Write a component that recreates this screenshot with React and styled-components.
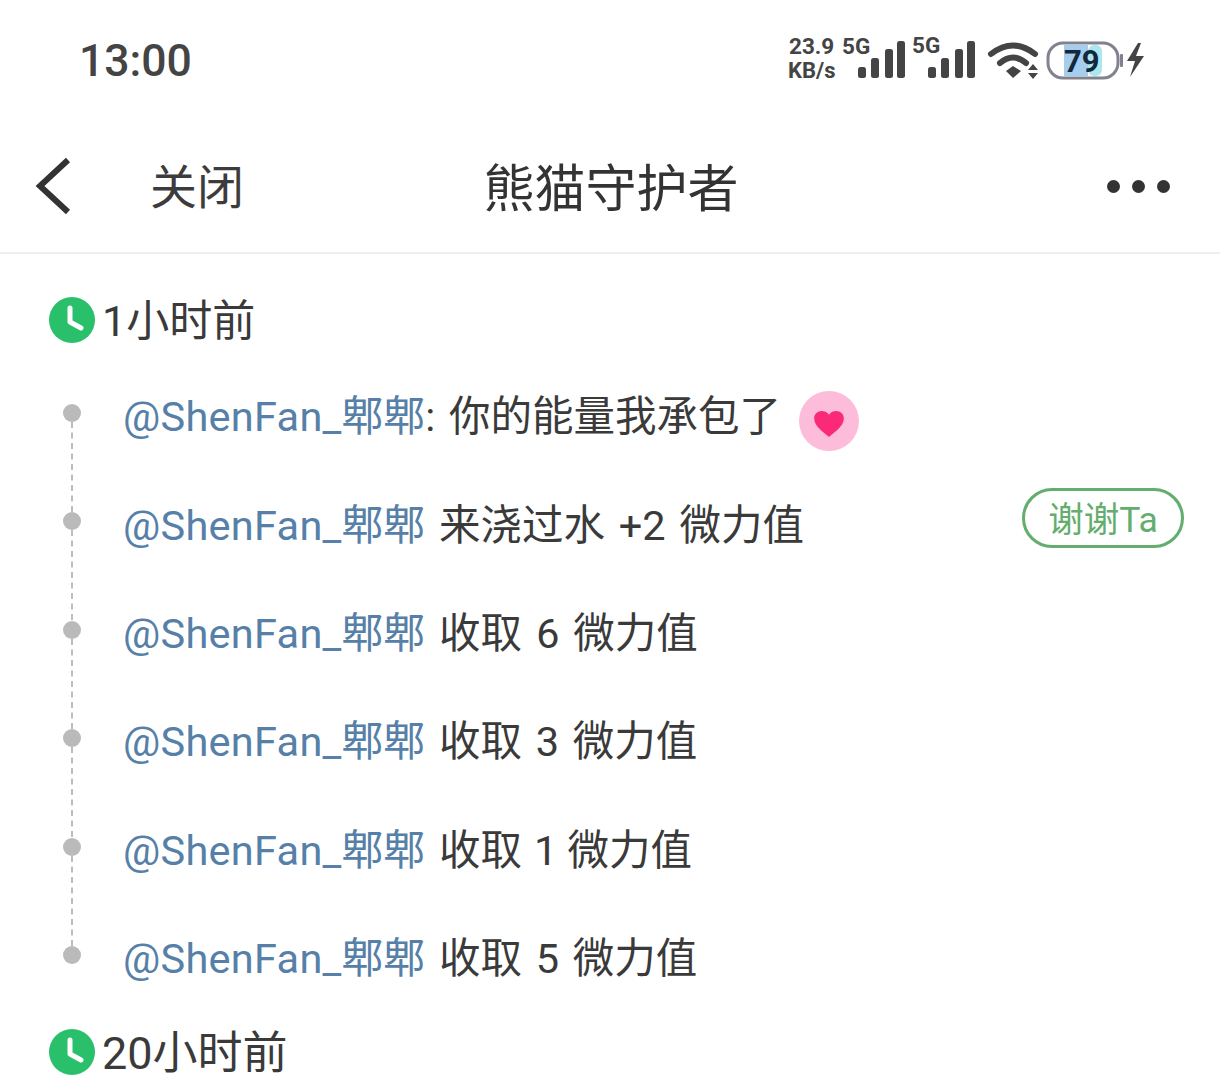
import React from 'react';
import styled, { createGlobalStyle } from 'styled-components';

const GlobalStyle = createGlobalStyle`
  html, body {
    margin: 0;
    padding: 0;
    background: #fff;
  }
  body {
    font-family: Roboto, "Noto Sans CJK SC", sans-serif;
    color: #333;
  }
`;

const Page = styled.div`
  width: 1220px;
  height: 1075px;
  overflow: hidden;
  background: #fff;
`;

const StatusBar = styled.div`
  height: 120px;
  display: flex;
  align-items: center;
  justify-content: space-between;
  padding: 0 74px 0 79px;
`;

const Clock = styled.div`
  margin-top: 2px;
  font-family: Roboto, sans-serif;
  font-size: 44.5px;
  font-weight: 500;
  color: #444;
`;

const StatusIcons = styled.div`
  display: flex;
  align-items: center;
`;

const NavBar = styled.header`
  height: 134px;
  box-sizing: border-box;
  border-bottom: 2px solid #eeeeee;
  display: grid;
  grid-template-columns: 1fr auto 1fr;
  align-items: center;
  padding: 0 35px;
`;

const NavLeft = styled.div`
  display: flex;
  align-items: center;
  gap: 79px;
`;

const CloseLabel = styled.span`
  margin-bottom: 6px;
  font-size: 47px;
  color: #3c3c3c;
`;

const Title = styled.h1`
  margin: 0 0 2px 2px;
  font-size: 51px;
  font-weight: 400;
  color: #333;
`;

const MoreDots = styled.div`
  justify-self: end;
  margin-right: 15px;
  display: flex;
  gap: 12px;
`;

const Dot = styled.span`
  width: 13px;
  height: 13px;
  border-radius: 50%;
  background: #333;
`;

const Feed = styled.main`
  padding: 24px 36px 0 49px;
`;

const GroupHeader = styled.div`
  display: flex;
  align-items: center;
  gap: 7px;
  height: 78px;
  font-size: ${p => p.$size || 43}px;
  color: #3a3a3a;
  white-space: nowrap;
`;

const ClockBadge = styled.span`
  display: flex;
  flex: none;
  width: 46px;
  height: 46px;
  margin-top: 6px;
`;

const Rows = styled.ul`
  list-style: none;
  margin: 3px 0 1px;
  padding: 0;
`;

const Row = styled.li`
  position: relative;
  display: flex;
  align-items: center;
  height: 108.4px;
  padding-left: 74px;
  font-size: 41.5px;
  font-variant-numeric: proportional-nums;
  word-spacing: 3.5px;
  color: #3a3a3a;
  white-space: pre;

  &::before {
    content: '';
    position: absolute;
    left: 14px;
    top: 45px;
    width: 18px;
    height: 18px;
    border-radius: 50%;
    background: #bababa;
  }

  &:not(:last-child)::after {
    content: '';
    position: absolute;
    left: 22px;
    top: 63px;
    height: 90px;
    border-left: 2px dashed #bdbdbd;
  }
`;

const Name = styled.span`
  color: #5680a8;
  letter-spacing: 0.27px;
`;

const HeartBadge = styled.span`
  display: flex;
  align-items: center;
  justify-content: center;
  width: 60px;
  height: 60px;
  margin-left: 18px;
  margin-top: 15px;
  border-radius: 50%;
  background: #fdbcd9;
`;

const HeartWrap = styled.span`
  display: flex;
  margin-top: 6px;
`;

const ThanksButton = styled.button`
  margin-left: auto;
  width: 162px;
  height: 60px;
  margin-top: -8px;
  box-sizing: border-box;
  padding: 0 0 6px;
  background: #fff;
  border: 3px solid #63ad6e;
  border-radius: 30px;
  font-family: inherit;
  font-size: 35.5px;
  color: #63ad6e;
`;

const StatusGlyphs = () => (
  <svg width="360" height="60" viewBox="0 0 360 60" fill="none">
    <g fill="#444" fontFamily="Roboto, sans-serif" fontWeight="700">
      <text x="3" y="24" fontSize="22.5">23.9</text>
      <text x="2" y="48" fontSize="22">KB/s</text>
      <text x="56" y="24" fontSize="22.5">5G</text>
      <text x="126" y="23" fontSize="22.5">5G</text>
      <rect x="72" y="37" width="8" height="11" rx="2.5" />
      <rect x="85" y="28" width="8" height="20" rx="2.5" />
      <rect x="99" y="19" width="8" height="29" rx="2.5" />
      <rect x="111" y="11" width="8" height="37" rx="2.5" />
      <rect x="142" y="37" width="8" height="11" rx="2.5" />
      <rect x="155" y="28" width="8" height="20" rx="2.5" />
      <rect x="169" y="19" width="8" height="29" rx="2.5" />
      <rect x="181" y="11" width="8" height="37" rx="2.5" />
    </g>
    <path d="M205 24 Q227 7 249 24" stroke="#444" strokeWidth="6" strokeLinecap="round" />
    <path d="M214 33 Q227 22 240 33" stroke="#444" strokeWidth="6" strokeLinecap="round" />
    <path d="M220 41 L227 36 L235 41 L227 48 Z" fill="#444" />
    <path d="M242 40 L247 34 L252 40 Z M242 43 L252 43 L247 49 Z" fill="#444" />
    <rect x="262" y="13" width="70" height="35" rx="15" stroke="#80838f" strokeWidth="3" fill="#fff" />
    <rect x="278" y="15" width="24" height="31" fill="#a4cdee" />
    <rect x="302" y="15" width="14" height="31" rx="6" fill="#aee6ee" />
    <rect x="334" y="24" width="3" height="13" rx="1" fill="#80838f" />
    <text x="278" y="42" fontSize="31" fontWeight="700" fontFamily="Roboto, sans-serif" fill="#12293d">79</text>
    <path d="M352 13 L341 31 L349 31 L344 47 L358 26 L350 26 L355 13 Z" fill="#444" />
  </svg>
);

const BackIcon = () => (
  <svg width="36" height="60" viewBox="0 0 36 60" fill="none">
    <path d="M33 4 L5 30 L33 56" stroke="#333" strokeWidth="6" />
  </svg>
);

const ClockIcon = () => (
  <svg width="46" height="46" viewBox="0 0 46 46">
    <circle cx="23" cy="23" r="23" fill="#2abf6a" />
    <path d="M21 11 V25 L32 31" fill="none" stroke="#fff" strokeWidth="5" strokeLinecap="round" strokeLinejoin="round" />
  </svg>
);

const HeartIcon = () => (
  <svg width="30" height="26" viewBox="0 0 32 28">
    <path d="M16 28 C12 24 0 17 0 8 C0 3 4 0 8 0 C11 0 14 1 16 4 C18 1 21 0 24 0 C28 0 32 3 32 8 C32 17 20 24 16 28 Z" fill="#fb2a78" />
  </svg>
);

const actions = [
  { id: 1, text: ' 来浇过水 +2 微力值', thanks: true },
  { id: 2, text: ' 收取 6 微力值' },
  { id: 3, text: ' 收取 3 微力值' },
  { id: 4, text: ' 收取 1 微力值' },
  { id: 5, text: ' 收取 5 微力值' },
];

const App = () => (
  <Page>
    <GlobalStyle />
    <StatusBar>
      <Clock>13:00</Clock>
      <StatusIcons>
        <StatusGlyphs />
      </StatusIcons>
    </StatusBar>
    <NavBar>
      <NavLeft>
        <BackIcon />
        <CloseLabel>关闭</CloseLabel>
      </NavLeft>
      <Title>熊猫守护者</Title>
      <MoreDots>
        <Dot />
        <Dot />
        <Dot />
      </MoreDots>
    </NavBar>
    <Feed>
      <GroupHeader>
        <ClockBadge><ClockIcon /></ClockBadge>
        1小时前
      </GroupHeader>
      <Rows>
        <Row>
          <Name>@ShenFan_郫郫</Name>: 你的能量我承包了
          <HeartBadge><HeartWrap><HeartIcon /></HeartWrap></HeartBadge>
        </Row>
        {actions.map(a => (
          <Row key={a.id}>
            <Name>@ShenFan_郫郫</Name>{a.text}
            {a.thanks && <ThanksButton>谢谢Ta</ThanksButton>}
          </Row>
        ))}
      </Rows>
      <GroupHeader $size={45}>
        <ClockBadge><ClockIcon /></ClockBadge>
        20小时前
      </GroupHeader>
    </Feed>
  </Page>
);

export default App;
